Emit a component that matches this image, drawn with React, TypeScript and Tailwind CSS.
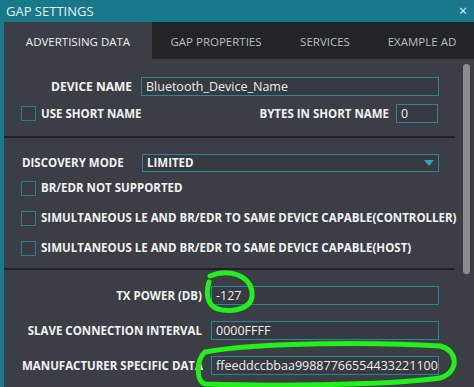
const labelFont = { fontFamily: '"Open Sans", "Noto Sans", sans-serif' };

function Checkbox() {
  return <div className="w-[15px] h-[15px] border border-[#2d7f8d] bg-[#383b42] shrink-0" />;
}

function TextBox({ value, className }: { value: string; className: string }) {
  return (
    <div
      className={`h-[19px] border border-[#2a8796] bg-[#373a41] px-[4px] text-[12.5px] leading-[17px] text-[#eeeeee] overflow-hidden whitespace-nowrap ${className}`}
    >
      {value}
    </div>
  );
}

function CheckRow({ label }: { label: string }) {
  return (
    <div className="flex items-center h-[16px] pl-[17px] gap-[5px]">
      <Checkbox />
      <span className="text-[11.5px] font-bold text-[#f2f2f2] whitespace-nowrap">{label}</span>
    </div>
  );
}

function FieldRow({ label, value, clip }: { label: string; value: string; clip?: boolean }) {
  return (
    <div className="flex items-center">
      {clip ? (
        <span className="w-[201px] pl-[18px] overflow-hidden text-[11.5px] font-bold text-[#f2f2f2] whitespace-nowrap">
          {label}
        </span>
      ) : (
        <span className="w-[198px] text-right text-[11.5px] font-bold text-[#f2f2f2] whitespace-nowrap">{label}</span>
      )}
      <TextBox value={value} className={`${clip ? 'ml-[6px]' : 'ml-[9px]'} w-[228px]`} />
    </div>
  );
}

export default function App() {
  return (
    <div className="relative w-[474px] h-[387px] bg-[#17798a] flex flex-col overflow-hidden" style={labelFont}>
      {/* Title bar */}
      <div className="h-[22px] flex items-center justify-between px-[6px] text-[#e6f2f4]">
        <span className="text-[13px] leading-none">GAP SETTINGS</span>
        <span className="text-[14px] leading-none mr-[1px]">×</span>
      </div>

      <div className="flex-1 ml-[4px] flex flex-col bg-[#3b3e45]">
        {/* Tabs */}
        <div className="h-[37px] flex bg-[#232427] text-[11.5px] pt-[3px]">
          <div className="w-[148px] -mt-[3px] pt-[3px] bg-[#3b3e45] flex items-center justify-center text-[#f0f0f0]">ADVERTISING DATA</div>
          <div className="w-[128px] flex items-center justify-center text-[#bdbdbd]">GAP PROPERTIES</div>
          <div className="w-[90px] flex items-center justify-center text-[#bdbdbd]">SERVICES</div>
          <div className="flex-1 flex items-center justify-center text-[#bdbdbd]">EXAMPLE AD</div>
        </div>

        <div className="flex-1 flex">
          {/* Content */}
          <div className="flex-1 flex flex-col">
            <div className="h-[77px] pt-[18px] flex flex-col gap-[8px]">
              <div className="flex items-center">
                <span className="w-[128px] text-right text-[12px] font-bold text-[#f2f2f2]">DEVICE NAME</span>
                <TextBox value="Bluetooth_Device_Name" className="ml-[9px] w-[298px]" />
              </div>
              <div className="flex items-center">
                <div className="flex items-center pl-[17px] gap-[5px]">
                  <Checkbox />
                  <span className="text-[11.5px] font-bold text-[#f2f2f2]">USE SHORT NAME</span>
                </div>
                <span className="ml-auto text-[11.5px] font-bold text-[#f2f2f2]">BYTES IN SHORT NAME</span>
                <TextBox value="0" className="ml-[7px] w-[42px] mr-[20px]" />
              </div>
            </div>
            <div className="h-[2px] bg-[#202124] mr-[3px]" />

            <div className="h-[130px] pt-[16px] flex flex-col">
              <div className="flex items-center h-[18px]">
                <span className="pl-[18px] w-[138px] text-[11.5px] font-bold text-[#f2f2f2]">DISCOVERY MODE</span>
                <div className="w-[297px] h-[18px] border border-[#2a8796] bg-[#373a41] flex items-center justify-between px-[4px]">
                  <span className="text-[11.5px] font-bold text-[#f2f2f2]">LIMITED</span>
                  <svg width="10" height="7" viewBox="0 0 10 7">
                    <path d="M0 0 H10 L5 6 Z" fill="#2aa6bd" />
                  </svg>
                </div>
              </div>
              <div className="mt-[8px] flex flex-col gap-[14px]">
                <CheckRow label="BR/EDR NOT SUPPORTED" />
                <CheckRow label="SIMULTANEOUS LE AND BR/EDR TO SAME DEVICE CAPABLE(CONTROLLER)" />
                <CheckRow label="SIMULTANEOUS LE AND BR/EDR TO SAME DEVICE CAPABLE(HOST)" />
              </div>
            </div>
            <div className="h-[2px] bg-[#202124] mr-[3px]" />

            <div className="pt-[16px] flex flex-col gap-[16px]">
              <FieldRow label="TX POWER (DB)" value="-127" />
              <FieldRow label="SLAVE CONNECTION INTERVAL" value="0000FFFF" />
              <FieldRow label="MANUFACTURER SPECIFIC DATA" value="ffeeddccbbaa99887766554433221100facefeed" clip />
            </div>
          </div>

          {/* Scrollbar */}
          <div className="w-[16px] flex justify-center pt-[5px] bg-[#3b3e45]">
            <div className="w-[7px] h-[210px] rounded-[4px] bg-[#8c8d90]" />
          </div>
        </div>
      </div>

      {/* Green marker annotations */}
      <svg className="absolute left-0 top-0 pointer-events-none" width="474" height="387">
        <path
          d="M210 276 C 230 268, 250 276, 252 292 C 254 306, 240 312, 222 310 C 208 308, 205 296, 209 282"
          fill="none"
          stroke="#22f01a"
          strokeWidth="5"
          strokeLinecap="round"
        />
        <path
          d="M205 352 C 260 342, 380 342, 440 346 C 458 350, 460 372, 440 378 C 380 386, 260 386, 205 384 C 196 382, 196 360, 205 352"
          fill="none"
          stroke="#22f01a"
          strokeWidth="5"
          strokeLinecap="round"
        />
      </svg>
    </div>
  );
}
